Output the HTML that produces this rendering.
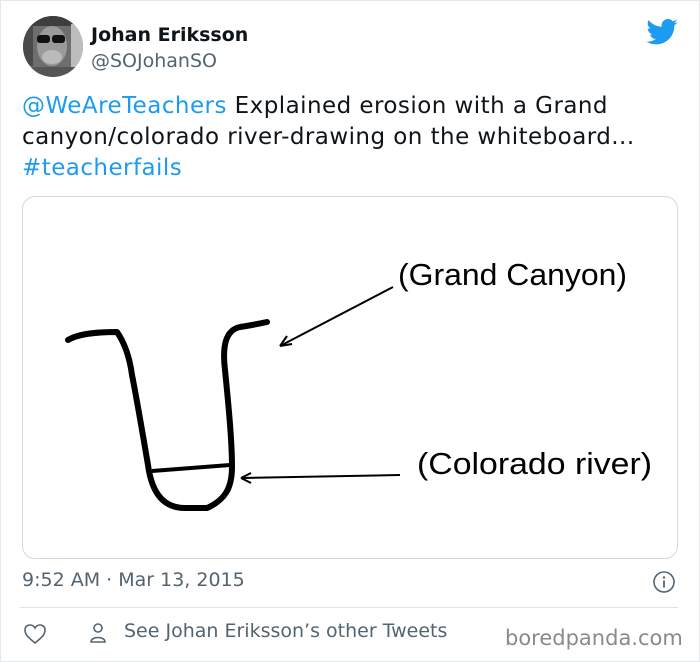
<!DOCTYPE html>
<html><head><meta charset="utf-8"><style>
body{margin:0;width:700px;height:662px;background:#fff;font-family:"DejaVu Sans","Liberation Sans",sans-serif;position:relative;overflow:hidden}
.frame{position:absolute;left:0;top:0;width:698px;height:660px;border:1px solid #e6e9eb}
.abs{position:absolute;white-space:nowrap}
</style></head><body>
<div class="frame"></div>
<svg class="abs" style="left:23px;top:16px" width="60" height="61" viewBox="0 0 60 61">
<defs><clipPath id="c"><ellipse cx="30" cy="30.5" rx="30" ry="30.5"/></clipPath></defs>
<g clip-path="url(#c)">
<rect width="60" height="61" fill="#6e6e6e"/>
<rect x="0" y="0" width="60" height="10" fill="#3e3e3e"/>
<rect x="0" y="10" width="10" height="40" fill="#4a4a4a"/>
<rect x="48" y="8" width="12" height="44" fill="#bdbdbd"/>
<ellipse cx="29" cy="30" rx="15" ry="20" fill="#9a9a9a"/>
<rect x="14" y="19" width="13" height="8" rx="3" fill="#111"/>
<rect x="29" y="19" width="13" height="8" rx="3" fill="#111"/>
<ellipse cx="29" cy="41" rx="10" ry="7" fill="#bbb"/>
<rect x="0" y="51" width="60" height="12" fill="#555"/>
</g></svg>
<div class="abs" style="left:91px;top:24px;font-weight:bold;font-size:19px;color:#0f1419">Johan Eriksson</div>
<div class="abs" style="left:91px;top:50px;font-size:19px;color:#536471">@SOJohanSO</div>
<svg class="abs" style="left:646px;top:19px" width="32" height="26" viewBox="0 0 24 20"><path fill="#1d9bf0" d="M24 2.4c-.9.4-1.8.6-2.8.8 1-.6 1.8-1.6 2.2-2.7-1 .6-2 1-3.1 1.2C19.4.7 18.1 0 16.6 0c-2.7 0-4.9 2.2-4.9 4.9 0 .4 0 .8.1 1.1C7.7 5.8 4.1 3.9 1.7.9c-.4.7-.7 1.6-.7 2.5 0 1.7.9 3.2 2.2 4.1-.8 0-1.6-.2-2.2-.6v.1c0 2.4 1.7 4.4 3.9 4.8-.4.1-.8.2-1.3.2-.3 0-.6 0-.9-.1.6 2 2.4 3.4 4.6 3.4-1.7 1.3-3.8 2.1-6.1 2.1-.4 0-.8 0-1.2-.1 2.2 1.4 4.8 2.2 7.5 2.2 9.1 0 14-7.5 14-14v-.6c1-.7 1.8-1.6 2.5-2.5z"/></svg>
<div class="abs" style="left:22px;top:91px;font-size:23px;letter-spacing:0.45px;line-height:31px;color:#0f1419"><span style="color:#1d9bf0">@WeAreTeachers</span> Explained erosion with a Grand<br>canyon/colorado river-drawing on the whiteboard...<br><span style="color:#1d9bf0">#teacherfails</span></div>
<div class="abs" style="left:22px;top:196px;width:654px;height:361px;border:1px solid #cfd9de;border-radius:13px;overflow:hidden">
<svg width="654" height="361" viewBox="23 197 654 361" style="display:block">
<path d="M68 340 C80 333 100 332 117 332 C126 345 130 360 132 375 C137 400 142 430 148 465 C152 495 165 508 185 508 L207 508 C225 500 232 488 232 467 C232 440 228 400 225 370 C222 345 226 330 240 327 C252 325 258 324 267 322" fill="none" stroke="#000" stroke-width="6" stroke-linecap="round" stroke-linejoin="round"/>
<path d="M152 471 L230 465" stroke="#000" stroke-width="4"/>
<path d="M393 287 L280 346" stroke="#000" stroke-width="2"/>
<path d="M280 346 L292 344 M280 346 L287 336" stroke="#000" stroke-width="2"/>
<path d="M400 475 L243 478" stroke="#000" stroke-width="2"/>
<path d="M241 478 L251 473 M241 478 L251 483" stroke="#000" stroke-width="2"/>
<text x="398" y="285" font-family="Liberation Sans, sans-serif" font-size="31" textLength="229" lengthAdjust="spacingAndGlyphs">(Grand Canyon)</text>
<text x="417" y="474" font-family="Liberation Sans, sans-serif" font-size="31" textLength="235" lengthAdjust="spacingAndGlyphs">(Colorado river)</text>
</svg></div>
<div class="abs" style="left:22px;top:569px;font-size:19px;color:#536471">9:52 AM · Mar 13, 2015</div>
<svg class="abs" style="left:652px;top:570px" width="24" height="24" viewBox="0 0 24 24"><circle cx="12" cy="12" r="10" fill="none" stroke="#536471" stroke-width="1.6"/><circle cx="12" cy="7.5" r="1.2" fill="#536471"/><path d="M12 10.5v7" stroke="#536471" stroke-width="1.8"/></svg>
<div class="abs" style="left:20px;top:607px;width:658px;height:1px;background:#dfe3e6"></div>
<svg class="abs" style="left:23px;top:623px" width="24" height="22" viewBox="0 0 24 22"><path d="M12 20 C6 15 2 12 2 7 C2 4 4 2 7 2 C9 2 11 3 12 5 C13 3 15 2 17 2 C20 2 22 4 22 7 C22 12 18 15 12 20Z" fill="none" stroke="#536471" stroke-width="1.6"/></svg>
<svg class="abs" style="left:88px;top:622px" width="20" height="24" viewBox="0 0 20 24"><circle cx="10" cy="6" r="4" fill="none" stroke="#536471" stroke-width="1.6"/><path d="M3 20 C3 14 17 14 17 20 Z" fill="none" stroke="#536471" stroke-width="1.6"/></svg>
<div class="abs" style="left:124px;top:620px;font-size:19px;color:#536471">See Johan Eriksson’s other Tweets</div>
<div class="abs" style="left:505px;top:626px;font-size:21px;color:#8a8a8a">boredpanda.com</div>
</body></html>
